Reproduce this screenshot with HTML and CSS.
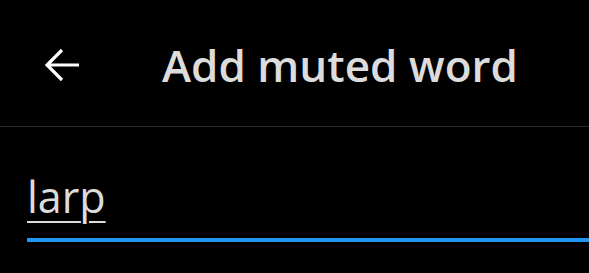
FILE: index.html
```html
<!DOCTYPE html>
<html>
<head>
<meta charset="utf-8">
<link rel="stylesheet" href="styles.css">
</head>
<body>
<header class="bar">
  <svg class="back" width="36" height="36" viewBox="0 0 36 36" aria-hidden="true">
    <path d="M34 18 H3 M17 3 L2 18 L17 33" fill="none" stroke="#fff" stroke-width="3.2" stroke-linecap="butt" stroke-linejoin="miter"/>
  </svg>
  <h1 class="title">Add muted word</h1>
</header>
<main class="field">
  <div class="value"><span class="word">larp</span></div>
  <div class="line"></div>
</main>
</body>
</html>
```
FILE: styles.css
```css
html, body {
  margin: 0;
  padding: 0;
  background: #000;
  height: 100%;
  overflow: hidden;
}
body {
  font-family: "Open Sans", "Noto Sans", sans-serif;
  color: #e0e0e0;
}
.bar {
  display: flex;
  align-items: center;
  height: 127px;
  border-bottom: 1px solid #2e2e2e;
  padding-left: 45px;
  box-sizing: border-box;
}
.back {
  display: block;
  flex: none;
  margin-top: 3px;
}
.title {
  margin: 0 0 0 81px;
  font-size: 44px;
  font-weight: 600;
  color: #dcdcdc;
  line-height: 1;
  padding-top: 4px;
}
.field {
  padding-left: 27px;
  padding-top: 48px;
}
.value {
  font-size: 43px;
  line-height: 1;
  color: #dcdcdc;
  height: 63px;
}
.word {
  text-decoration: underline;
  text-decoration-thickness: 2px;
  text-underline-offset: 8px;
}
.line {
  height: 4px;
  background: #2196f3;
}
```
